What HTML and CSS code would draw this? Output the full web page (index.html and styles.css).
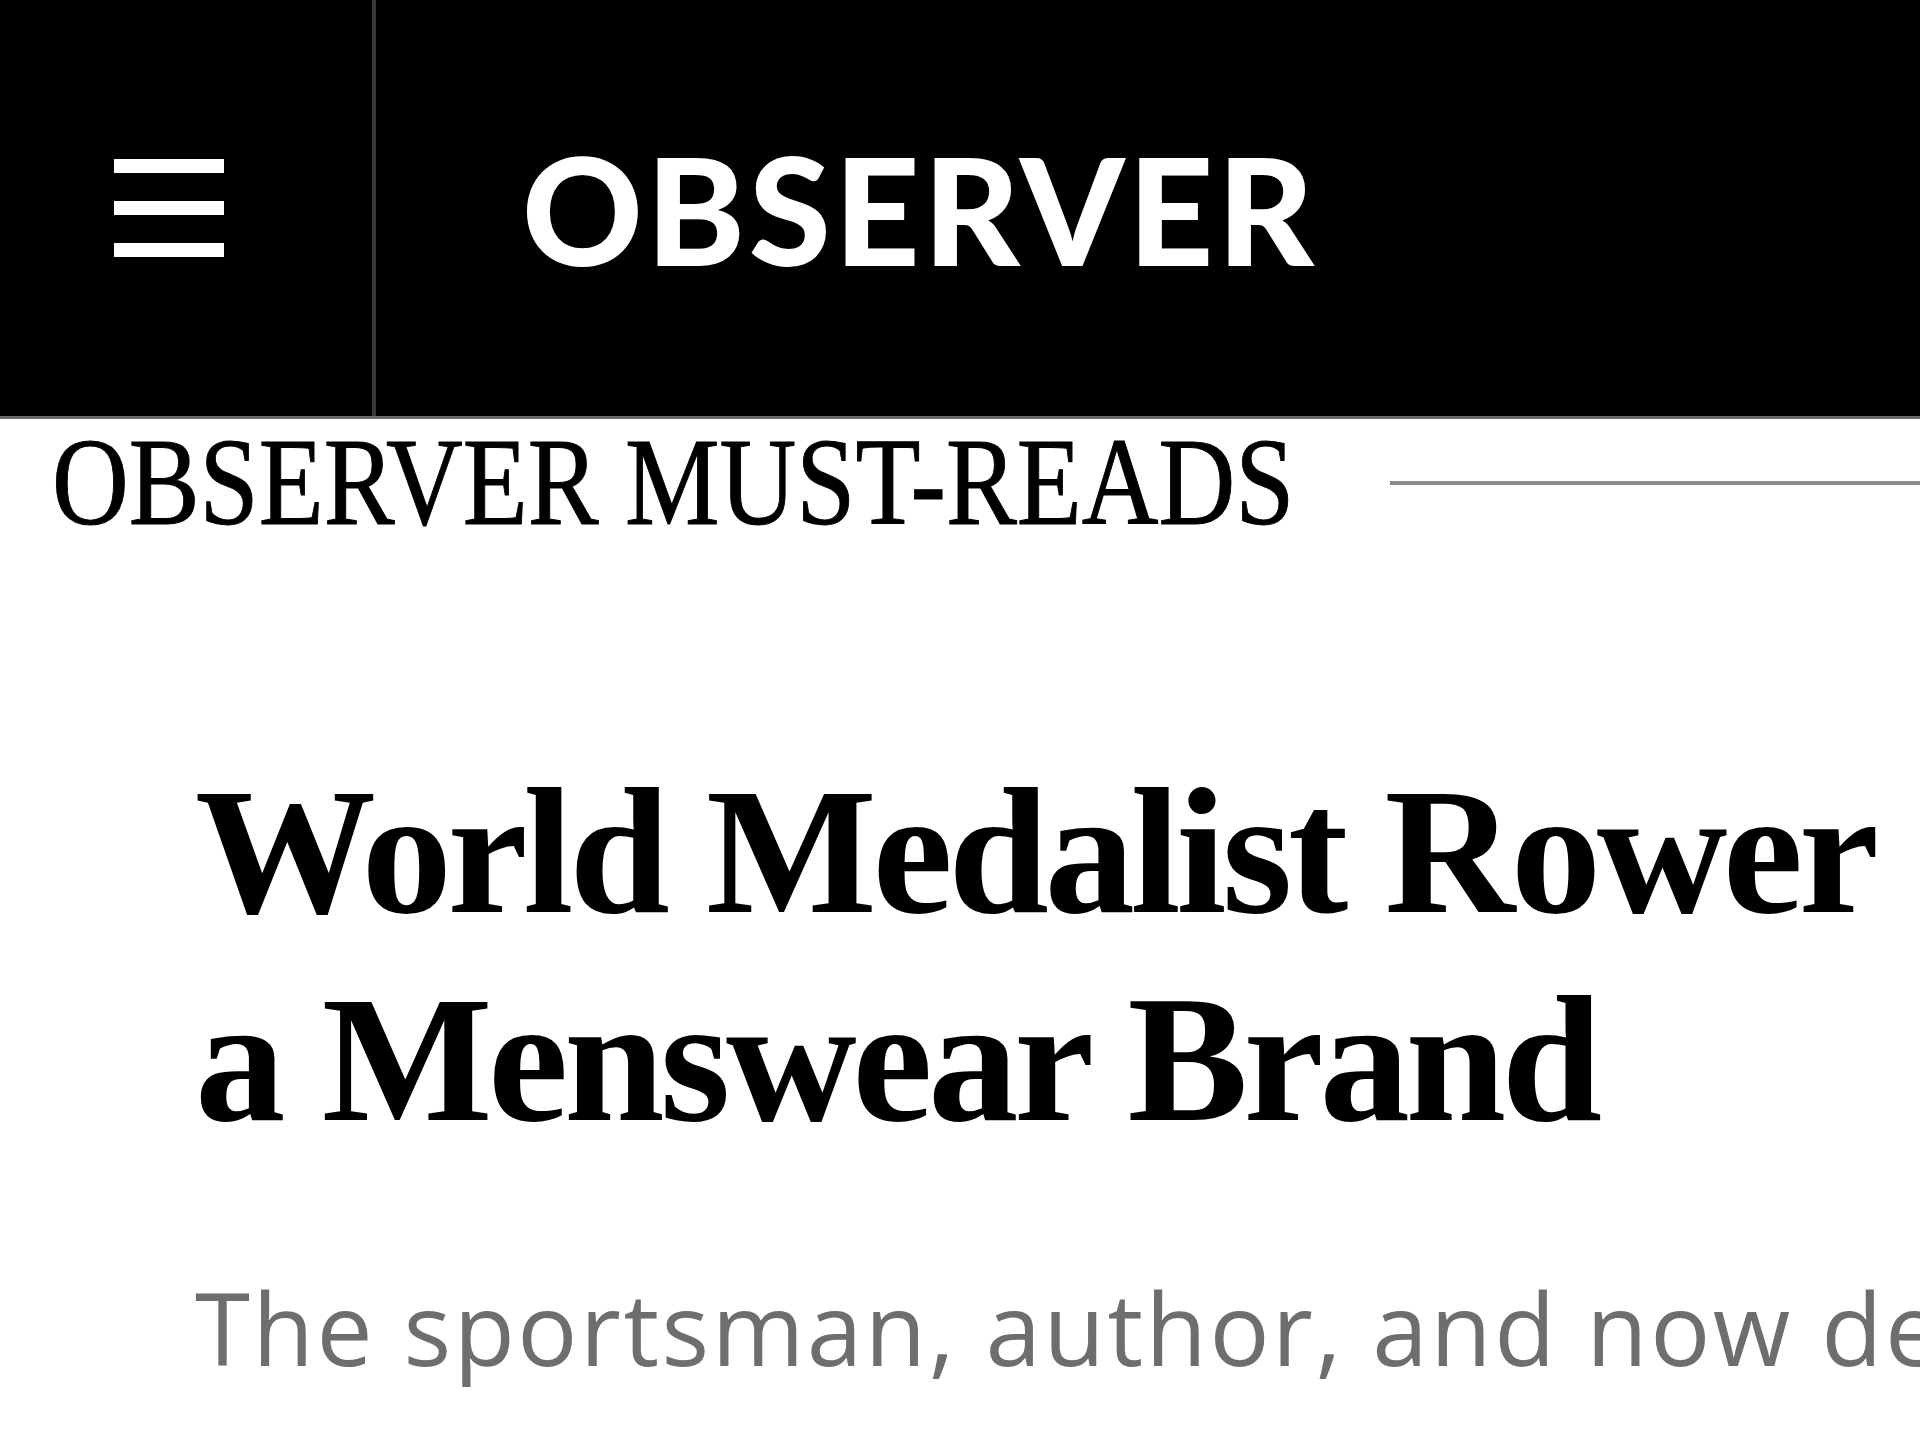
FILE: index.html
```html
<!DOCTYPE html>
<html lang="en">
<head>
    <meta charset="UTF-8">
    <meta name="viewport" content="width=device-width, initial-scale=1.0">
    <title>Observer Must-Reads</title>
    <link rel="stylesheet" href="styles.css">
</head>
<body>

<!-- Cabecera -->
<header class="site-header">
    <button type="button" class="menu-btn" aria-label="Menu">
        <svg width="110" height="98" viewBox="0 0 110 98">
            <rect x="0" y="0" width="110" height="14" fill="#fff"/>
            <rect x="0" y="42" width="110" height="14" fill="#fff"/>
            <rect x="0" y="84" width="110" height="14" fill="#fff"/>
        </svg>
    </button>
    <a href="#" class="logo">OBSERVER</a>
</header>

<!-- Seccion -->
<div class="section-title">
    <span class="section-label">OBSERVER MUST-READS</span>
    <span class="section-rule"></span>
</div>

<article class="story">
    <h1 class="story-title">World Medalist Rower a Menswear Brand</h1>
    <p class="story-dek">The sportsman, author, and now designer</p>
</article>

</body>
</html>
```

FILE: styles.css
```css
body {
    margin: 0;
    background: #fff;
    overflow: hidden;
}
.site-header {
    display: flex;
    align-items: center;
    height: 416px;
    background: #000;
    border-bottom: 3px solid #6a6a6a;
}
.menu-btn {
    display: flex;
    align-items: center;
    height: 100%;
    width: 376px;
    padding: 0 0 0 114px;
    margin: 0;
    background: none;
    border: none;
    border-right: 4px solid #3a3a3a;
    box-sizing: border-box;
    cursor: pointer;
}
.menu-btn svg {
    display: block;
}
.logo {
    margin-left: 146px;
    font-family: "Lato", "Liberation Sans", sans-serif;
    font-weight: 900;
    font-size: 149px;
    line-height: 1;
    color: #fff;
    text-decoration: none;
    letter-spacing: 3.5px;
}
.section-title {
    display: flex;
    align-items: center;
    margin-top: 2px;
    height: 124px;
}
.section-label {
    flex: none;
    width: 1232px;
    margin-left: 52px;
    font-family: "Liberation Serif", "Times New Roman", serif;
    font-size: 124px;
    line-height: 124px;
    color: #000;
    white-space: nowrap;
    -webkit-text-stroke: 1px #000;
    transform: scaleX(0.857);
    transform-origin: left center;
}
.section-rule {
    flex: 1;
    height: 4px;
    margin-left: 106px;
    background: #8a8a8a;
}
.story {
    padding-left: 195px;
    overflow: hidden;
}
.story-title {
    margin: 202px 0 0;
    font-family: "Liberation Serif", "Times New Roman", serif;
    font-weight: bold;
    font-size: 181px;
    line-height: 208px;
    color: #000;
    letter-spacing: -4.5px;
}
.story-dek {
    margin: 104px 0 0;
    font-family: "Open Sans", "Liberation Sans", sans-serif;
    font-size: 100px;
    line-height: 120px;
    color: #6e6e6e;
    letter-spacing: 2.5px;
    white-space: nowrap;
}
```
